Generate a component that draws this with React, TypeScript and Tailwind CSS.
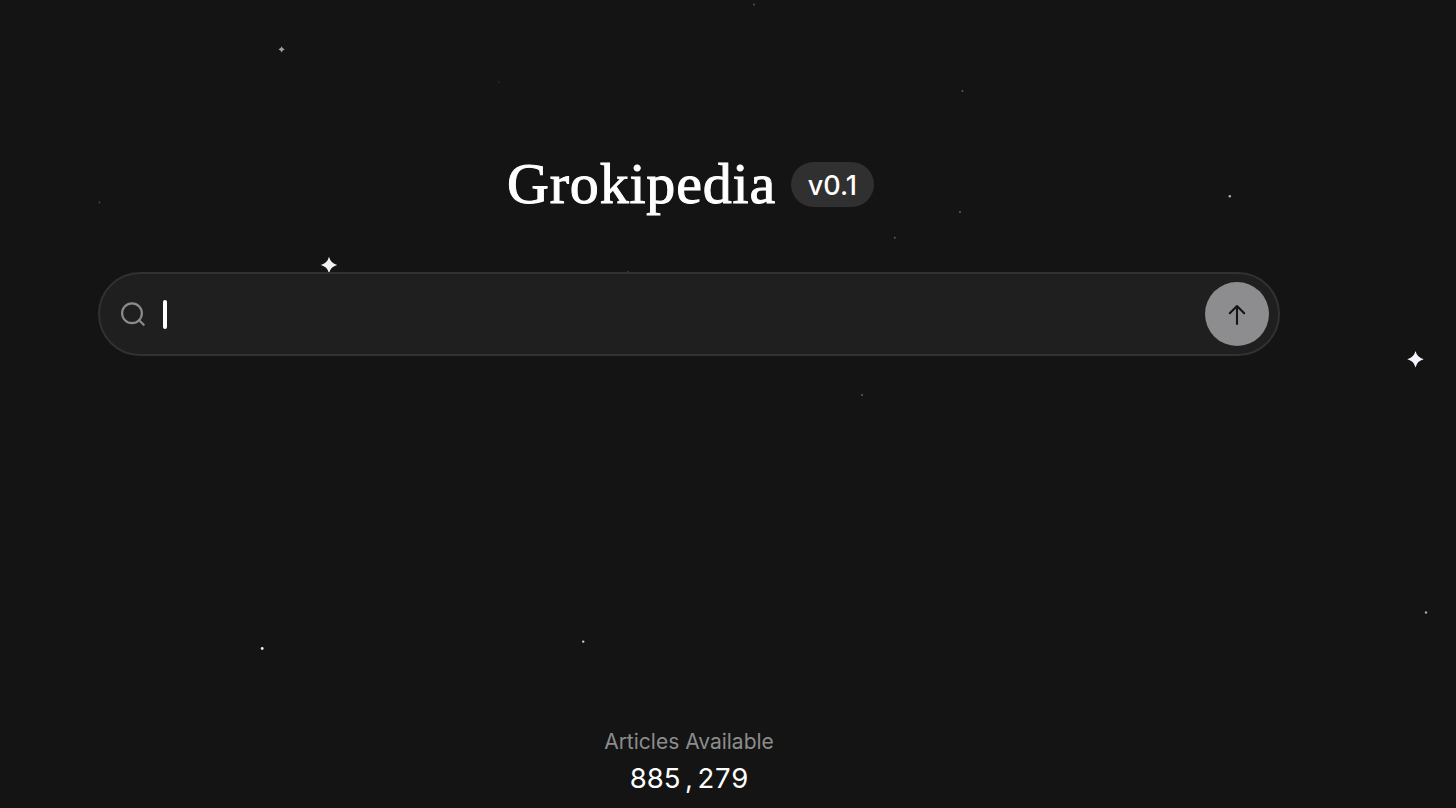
import React from 'react';

interface Star {
  x: number;
  y: number;
  r: number;
  fill: string;
}

const stars: Star[] = [
  { x: 754, y: 4.5, r: 0.9, fill: '#5a5a5a' },
  { x: 499, y: 82, r: 0.9, fill: '#2c2c2c' },
  { x: 962.5, y: 91, r: 0.9, fill: '#606060' },
  { x: 99.5, y: 202.5, r: 0.9, fill: '#484848' },
  { x: 960, y: 212, r: 0.9, fill: '#6a6a6a' },
  { x: 894.8, y: 237.7, r: 0.9, fill: '#666666' },
  { x: 1229.8, y: 196.3, r: 1.2, fill: '#b4b4b4' },
  { x: 862, y: 395, r: 1, fill: '#606060' },
  { x: 262.2, y: 648.5, r: 1.4, fill: '#eeeeee' },
  { x: 583.2, y: 641.6, r: 1.2, fill: '#d0d0d0' },
  { x: 1426, y: 612.5, r: 1.2, fill: '#a8a8a8' },
  { x: 628, y: 271.5, r: 0.7, fill: '#484848' },
];

const sparkles: Star[] = [
  { x: 329, y: 265, r: 8.2, fill: '#f2f2f5' },
  { x: 1415.5, y: 359.3, r: 8.2, fill: '#f4f6fc' },
  { x: 281.6, y: 49.4, r: 3.2, fill: '#a0a0a0' },
];

const Starfield = () => (
  <svg className="absolute inset-0 h-full w-full pointer-events-none" viewBox="0 0 1456 808" aria-hidden="true">
    {stars.map((s) => (
      <circle key={`${s.x}-${s.y}`} cx={s.x} cy={s.y} r={s.r} fill={s.fill} />
    ))}
    {sparkles.map((s) => (
      <path
        key={`${s.x}-${s.y}`}
        d="M0 -1Q.2 -.2 1 0Q.2 .2 0 1Q-.2 .2 -1 0Q-.2 -.2 0 -1Z"
        transform={`translate(${s.x} ${s.y}) scale(${s.r})`}
        fill={s.fill}
      />
    ))}
  </svg>
);

const SearchBar = () => (
  <div className="flex h-[84px] w-full items-center rounded-full border-2 border-[#313131] bg-[#1f1f1f] pr-[9px] pl-5">
    <svg width="28" height="28" viewBox="0 0 28 28" fill="none" stroke="#8b8b8b" strokeWidth="2.2" strokeLinecap="round">
      <circle cx="12" cy="13.2" r="9.9" />
      <path d="M19.1 20.2L23.7 24.8" />
    </svg>
    <span className="ml-[15px] h-[29px] w-[3.5px] rounded-full bg-white" />
    <button className="ml-auto flex h-16 w-16 items-center justify-center rounded-full bg-[#8d8d8f]" aria-label="Search">
      <svg
        width="24"
        height="24"
        viewBox="0 0 24 24"
        fill="none"
        stroke="#141414"
        strokeWidth="2.1"
        strokeLinecap="round"
        strokeLinejoin="round"
      >
        <path d="M12 22V4.2M4.8 11.2L12 4L19.2 11.2" />
      </svg>
    </button>
  </div>
);

// every character sits in a cell of the same width
const Counter = ({ value }: { value: string }) => (
  <p className="mt-1 flex text-[27.5px] leading-9">
    {value.split('').map((char, i) => (
      <span key={i} className="flex w-[16.9px] justify-center">{char}</span>
    ))}
  </p>
);

export default function App() {
  return (
    <div className="relative h-[808px] w-[1456px] overflow-hidden bg-[#141414] font-['Inter',sans-serif] text-white">
      <Starfield />
      <main className="relative ml-[98px] flex h-full w-[1182px] flex-col items-center pt-[152px]">
        <header className="flex h-16 items-center gap-[15px] pl-[3px]">
          <h1 className="font-['Liberation_Serif',serif] text-[58px] leading-[64px] tracking-[0.8px] [-webkit-text-stroke:1px_white]">
            Grokipedia
          </h1>
          <span className="flex h-[45px] w-[83px] items-center justify-center rounded-full bg-[#303030] pt-1 text-[27px] leading-8 font-medium">
            v0.1
          </span>
        </header>
        <div className="mt-14 w-full">
          <SearchBar />
        </div>
        <footer className="mt-auto flex flex-col items-center pb-3">
          <p className="text-[21px] leading-7 text-[#8c8c8c]">Articles Available</p>
          <Counter value="885,279" />
        </footer>
      </main>
    </div>
  );
}
